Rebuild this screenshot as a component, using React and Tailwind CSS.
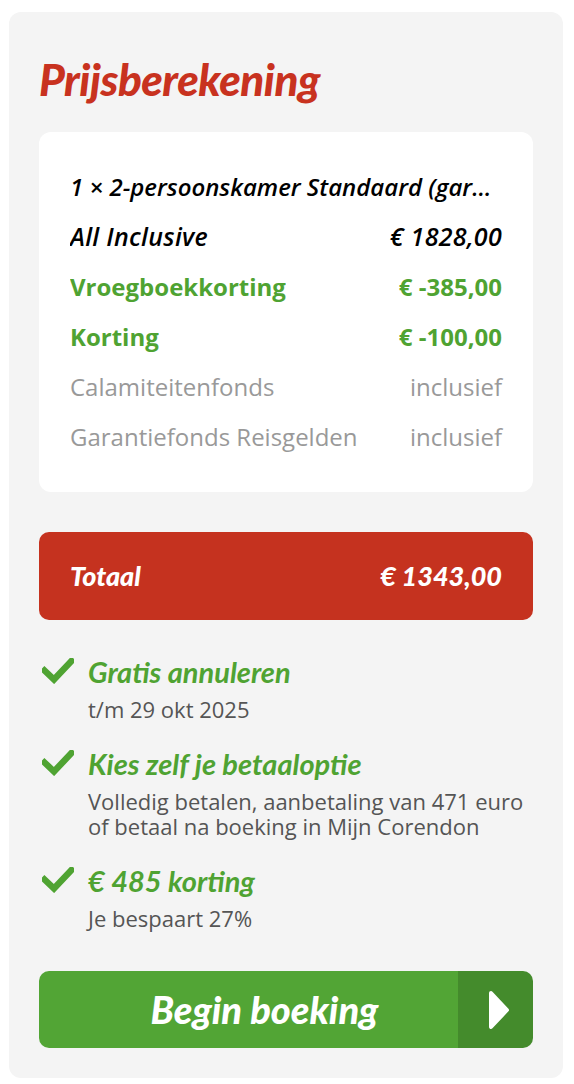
import React from 'react';

const rows = [
  { label: '1 × 2-persoonskamer Standaard (garantiekamer)', value: '', kind: 'title' },
  { label: 'All Inclusive', value: '€ 1828,00', kind: 'head' },
  { label: 'Vroegboekkorting', value: '€ -385,00', kind: 'green' },
  { label: 'Korting', value: '€ -100,00', kind: 'green' },
  { label: 'Calamiteitenfonds', value: 'inclusief', kind: 'gray' },
  { label: 'Garantiefonds Reisgelden', value: 'inclusief', kind: 'gray' },
];

const perks = [
  { title: 'Gratis annuleren', text: 't/m 29 okt 2025' },
  { title: 'Kies zelf je betaaloptie', text: 'Volledig betalen, aanbetaling van 471 euro of betaal na boeking in Mijn Corendon' },
  { title: '€ 485 korting', text: 'Je bespaart 27%' },
];

const Check = () => (
  <svg width="32" height="26" viewBox="0 0 32 26" className="shrink-0">
    <path d="M2.5 12.5 L12 21.5 L29.5 3" fill="none" stroke="#4fa332" strokeWidth="6.5" strokeLinecap="square" strokeLinejoin="miter" />
  </svg>
);

const rowClass = {
  title: "font-['Open_Sans',sans-serif] italic font-semibold text-[24px] tracking-[0px] text-black",
  head: "font-['Open_Sans',sans-serif] italic font-semibold text-[25px] tracking-[0.3px] text-black",
  green: "font-['Open_Sans',sans-serif] font-bold text-[24px] text-[#4fa332]",
  gray: "font-['Open_Sans',sans-serif] text-[24px] text-[#999999]",
};

export default function App() {
  return (
    <div className="bg-white min-h-[1084px] pt-[12px] pl-[9px]">
      <div className="w-[554px] bg-[#f4f4f4] rounded-[12px] px-[30px] pt-[43px] pb-[30px]">
        <h2 className="font-['Lato',sans-serif] italic font-black text-[44px] leading-[48px] text-[#c8321f] tracking-[-0.5px]">
          Prijsberekening
        </h2>

        <div className="mt-[29px] bg-white rounded-[12px] px-[31px] py-[30px]">
          {rows.map((r, i) => (
            <div key={i} className={`flex justify-between items-center h-[50px] gap-4 ${rowClass[r.kind]}`}>
              <span className="truncate">{r.label}</span>
              {r.value && <span className="shrink-0">{r.value}</span>}
            </div>
          ))}
        </div>

        <div className="mt-[40px] h-[88px] bg-[#c5321f] rounded-[10px] px-[31px] flex items-center justify-between font-['Lato',sans-serif] italic font-black text-[27px] text-white">
          <span>Totaal</span>
          <span>€ 1343,00</span>
        </div>

        <div className="mt-[34px] flex flex-col gap-[24px]">
          {perks.map((p, i) => (
            <div key={i} className="flex gap-[14px] pl-[3px]">
              <div className="pt-[4px]">
                <Check />
              </div>
              <div>
                <div className="font-['Lato',sans-serif] italic font-bold text-[29px] leading-[36px] text-[#4fa332]">
                  {p.title}
                </div>
                <div className="mt-[7px] font-['Open_Sans',sans-serif] text-[22px] leading-[25px] text-[#555555]">
                  {p.text}
                </div>
              </div>
            </div>
          ))}
        </div>

        <button className="mt-[40px] w-full h-[77px] flex rounded-[10px] overflow-hidden">
          <span className="flex-1 bg-[#52a535] flex items-center justify-center pl-[32px] font-['Lato',sans-serif] italic font-black text-[38px] text-white">
            Begin boeking
          </span>
          <span className="w-[75px] bg-[#448b2c] flex items-center justify-center pl-[6px]">
            <svg width="22" height="40" viewBox="0 0 22 40">
              <path d="M3 3 L19 20 L3 37 Z" fill="white" stroke="white" strokeWidth="4" strokeLinejoin="round" />
            </svg>
          </span>
        </button>
      </div>
    </div>
  );
}
